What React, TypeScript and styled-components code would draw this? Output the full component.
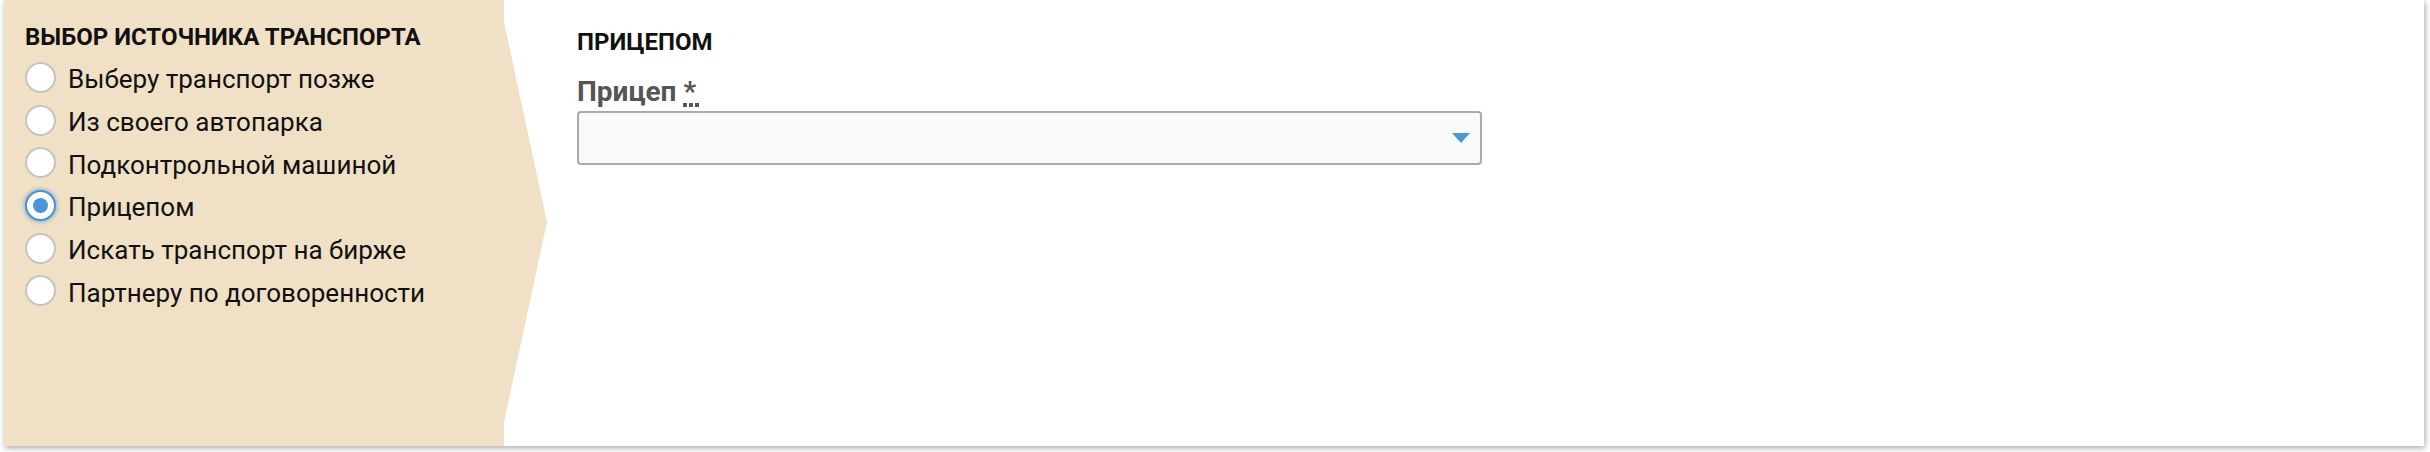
import styled, { createGlobalStyle } from "styled-components";

const GlobalStyle = createGlobalStyle`
  html, body {
    margin: 0;
    padding: 0;
    background: #ffffff;
  }
  body {
    font-family: Roboto, "Liberation Sans", Arial, sans-serif;
    color: #111;
  }
`;

const Page = styled.div`
  padding: 0 6px 6px 4px;
  height: 452px;
  box-sizing: border-box;
`;

const Card = styled.div`
  display: flex;
  height: 446px;
  background: #fff;
  box-shadow: 1px 2px 6px rgba(0, 0, 0, 0.35);
`;

const SourcePanel = styled.div`
  width: 543px;
  flex-shrink: 0;
  box-sizing: border-box;
  padding: 23px 0 0 21px;
  background: #f0e0c6;
  clip-path: polygon(
    0 0,
    500px 0,
    500px 22px,
    543px 222px,
    500px 422px,
    500px 100%,
    0 100%
  );
`;

const PanelTitle = styled.div`
  font-size: 24px;
  line-height: 28px;
  font-weight: 700;
  text-transform: uppercase;
  color: #111;
  margin-bottom: 7px;
`;

const OptionList = styled.div`
  display: flex;
  flex-direction: column;
`;

const Option = styled.label`
  display: flex;
  align-items: center;
  height: 42.7px;
  gap: 12px;
  font-size: 26px;
  color: #111;
  cursor: pointer;
`;

const Radio = styled.span<{ $checked?: boolean }>`
  width: 31px;
  height: 31px;
  box-sizing: border-box;
  border-radius: 50%;
  margin-top: -4px;
  flex-shrink: 0;
  display: flex;
  align-items: center;
  justify-content: center;
  background: #fff;
  border: 2px solid ${(p) => (p.$checked ? "#4a90d9" : "#c4c4c4")};
  box-shadow: ${(p) => (p.$checked ? "0 0 4px 1px rgba(74, 144, 217, 0.6)" : "none")};

  &::after {
    content: "";
    display: ${(p) => (p.$checked ? "block" : "none")};
    width: 15px;
    height: 15px;
    border-radius: 50%;
    background: #4d94da;
  }
`;

const Content = styled.div`
  flex: 1;
  padding: 28px 0 0 30px;
`;

const SectionTitle = styled.div`
  font-size: 24px;
  line-height: 28px;
  font-weight: 700;
  text-transform: uppercase;
  color: #111;
  margin-bottom: 20px;
`;

const FieldLabel = styled.div`
  font-size: 28px;
  font-weight: 700;
  color: #555;
  line-height: 32px;
  margin-bottom: 3px;
`;

const Required = styled.abbr`
  position: relative;
  text-decoration: none;
  cursor: help;

  &::after {
    content: "";
    position: absolute;
    left: 0;
    bottom: 1px;
    width: 16px;
    height: 4px;
    background: repeating-linear-gradient(
      to right,
      #555 0 4px,
      transparent 4px 6px
    );
  }
`;

const Select = styled.div`
  width: 905px;
  height: 54px;
  box-sizing: border-box;
  border: 2px solid #aaa;
  border-radius: 4px;
  background: #f9f9f9;
  display: flex;
  align-items: center;
  justify-content: flex-end;
  padding-right: 10px;
`;

const options = [
  "Выберу транспорт позже",
  "Из своего автопарка",
  "Подконтрольной машиной",
  "Прицепом",
  "Искать транспорт на бирже",
  "Партнеру по договоренности",
];

export default function App() {
  const selected = "Прицепом";
  return (
    <Page>
      <GlobalStyle />
      <Card>
        <SourcePanel>
          <PanelTitle>Выбор источника транспорта</PanelTitle>
          <OptionList>
            {options.map((o) => (
              <Option key={o}>
                <Radio $checked={o === selected} />
                {o}
              </Option>
            ))}
          </OptionList>
        </SourcePanel>
        <Content>
          <SectionTitle>Прицепом</SectionTitle>
          <FieldLabel>
            Прицеп <Required title="обязательное поле">*</Required>
          </FieldLabel>
          <Select>
            <svg width="18" height="10" viewBox="0 0 18 10">
              <path d="M0 0h18L9 10z" fill="#4a97d9" />
            </svg>
          </Select>
        </Content>
      </Card>
    </Page>
  );
}
